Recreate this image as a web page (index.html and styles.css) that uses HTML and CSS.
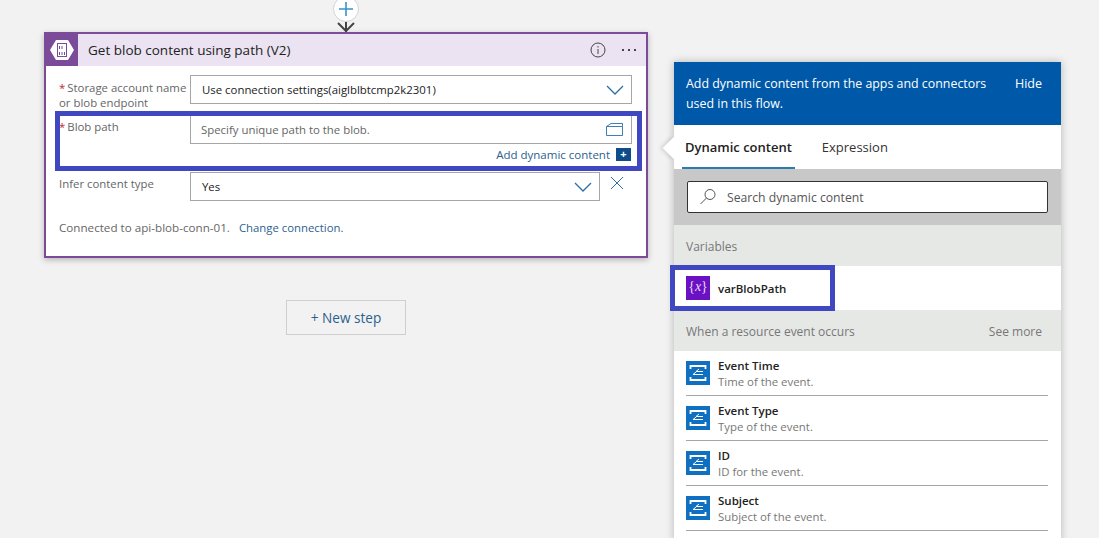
FILE: index.html
```html
<!DOCTYPE html>
<html lang="en">
<head>
    <meta charset="UTF-8">
    <title>Get blob content using path</title>
    <link rel="stylesheet" href="styles.css">
</head>
<body>

<div class="canvas">
    <div class="connector">
        <div class="add-circle">
            <svg width="16" height="16" viewBox="0 0 16 16"><path d="M8 1v14M1 8h14" stroke="#3a93c6" stroke-width="1.6"/></svg>
        </div>
        <svg class="arrow" width="20" height="12" viewBox="0 0 20 12"><path d="M2 1l8 8 8-8M10 0v10" fill="none" stroke="#444" stroke-width="2"/></svg>
    </div>

    <div class="card">
        <div class="card-head">
            <div class="card-icon">
                <svg width="24" height="22" viewBox="0 0 24 22">
                    <path d="M6 1h12l6 10-6 10H6L0 11z" fill="#fff"/>
                    <rect x="7.500" y="4.500" width="9" height="13" fill="#fff" stroke="#7b4a99"/>
                    <path d="M9.500 7v3M12 7v3M9.500 13v3M12 13v3M14.500 13v3" stroke="#7b4a99"/>
                </svg>
            </div>
            <div class="card-title">Get blob content using path (V2)</div>
            <svg class="info" width="16" height="16" viewBox="0 0 16 16"><circle cx="8" cy="8" r="7" fill="none" stroke="#444"/><path d="M8 7v5M8 4v1.500" stroke="#444"/></svg>
            <div class="dots"><i></i><i></i><i></i></div>
        </div>
        <div class="card-body">
            <div class="row row-first">
                <label class="lbl">
                    <span class="lbl-line"><span class="req">*</span>Storage account name</span>
                    <span class="lbl-line">or blob endpoint</span>
                </label>
                <div class="field">
                    <span class="val">Use connection settings(aiglblbtcmp2k2301)</span>
                    <svg class="chev" width="18" height="10" viewBox="0 0 18 10"><path d="M1 1l8 8 8-8" fill="none" stroke="#2c6fa8" stroke-width="1.300"/></svg>
                </div>
            </div>
            <div class="row row-blob">
                <label class="lbl"><span class="req">*</span>Blob path</label>
                <div class="blob-col">
                    <div class="field field-blob">
                        <span class="val hint">Specify unique path to the blob.</span>
                        <svg class="folder" width="17" height="13" viewBox="0 0 17 13"><path d="M.5 3.500h16v9H.5zM.5 3.500L5 .5h11.500v3" fill="none" stroke="#2c6fa8" stroke-width=".9"/></svg>
                    </div>
                    <div class="add-dyn">
                        <span>Add dynamic content</span>
                        <b class="plus-box">+</b>
                    </div>
                </div>
            </div>
            <div class="row row-infer">
                <label class="lbl">Infer content type</label>
                <div class="field field-short">
                    <span class="val">Yes</span>
                    <svg class="chev" width="18" height="10" viewBox="0 0 18 10"><path d="M1 1l8 8 8-8" fill="none" stroke="#2c6fa8" stroke-width="1.300"/></svg>
                </div>
                <svg class="close" width="14" height="14" viewBox="0 0 14 14"><path d="M1 1l12 12M13 1L1 13" stroke="#2c6fa8"/></svg>
            </div>
            <div class="conn">Connected to api-blob-conn-01. <a class="change">Change connection.</a></div>
        </div>
        <div class="mark mark-blob"></div>
    </div>

    <div class="new-step">+ New step</div>
</div>

<div class="panel">
    <div class="callout"></div>
    <div class="panel-head">
        <div class="panel-msg">Add dynamic content from the apps and connectors used in this flow.</div>
        <div class="hide">Hide</div>
    </div>
    <div class="tabs">
        <div class="tab tab-on">Dynamic content</div>
        <div class="tab">Expression</div>
    </div>
    <div class="search-band">
        <div class="search">
            <svg width="18" height="18" viewBox="0 0 18 18"><circle cx="11" cy="6.500" r="5" fill="none" stroke="#555"/><path d="M7.500 10L1.500 16" stroke="#555"/></svg>
            <span>Search dynamic content</span>
        </div>
    </div>
    <div class="band">Variables</div>
    <div class="var-row">
        <div class="ico ico-var"><span>{<em>x</em>}</span></div>
        <div class="item-name">varBlobPath</div>
    </div>
    <div class="band band-more"><span>When a resource event occurs</span><span>See more</span></div>

    <div class="item">
        <div class="ico ico-event"><svg width="24" height="24" viewBox="0 0 24 24"><use href="#evt"/></svg></div>
        <div class="item-text"><div class="item-name">Event Time</div><div class="item-sub">Time of the event.</div></div>
    </div>
    <div class="item">
        <div class="ico ico-event"><svg width="24" height="24" viewBox="0 0 24 24"><use href="#evt"/></svg></div>
        <div class="item-text"><div class="item-name">Event Type</div><div class="item-sub">Type of the event.</div></div>
    </div>
    <div class="item">
        <div class="ico ico-event"><svg width="24" height="24" viewBox="0 0 24 24"><use href="#evt"/></svg></div>
        <div class="item-text"><div class="item-name">ID</div><div class="item-sub">ID for the event.</div></div>
    </div>
    <div class="item">
        <div class="ico ico-event"><svg width="24" height="24" viewBox="0 0 24 24"><use href="#evt"/></svg></div>
        <div class="item-text"><div class="item-name">Subject</div><div class="item-sub">Subject of the event.</div></div>
    </div>
    <div class="mark mark-var"></div>
</div>

<svg width="0" height="0" class="defs">
    <defs>
        <g id="evt">
            <path d="M4.500 8V5h15v3M4.500 16v3h15v-3" fill="none" stroke="#fff" stroke-width="1.800"/>
            <path d="M17 10.500H10l3-2.500M17 13.500H7l3-2.500" fill="none" stroke="#fff"/>
        </g>
    </defs>
</svg>

</body>
</html>
```

FILE: styles.css
```css
html, body {
    margin: 0;
    height: 538px;
    overflow: hidden;
}
body {
    display: flex;
    align-items: flex-start;
    background: #f2f2f2;
    font-family: "Open Sans", "Noto Sans", sans-serif;
    font-size: 12px;
    color: #222;
}
.defs {
    position: absolute;
}
.canvas {
    width: 604px;
    margin-left: 44px;
    display: flex;
    flex-direction: column;
    align-items: center;
}
.connector {
    height: 32px;
    display: flex;
    flex-direction: column;
    align-items: center;
    overflow: hidden;
}
.add-circle {
    width: 24px;
    height: 24px;
    margin-top: -4px;
    flex: none;
    border-radius: 50%;
    background: #fff;
    border: 1px solid #d4d4d4;
    display: flex;
    align-items: center;
    justify-content: center;
}
.arrow {
    flex: none;
    margin-top: 0;
}

/* card */
.card {
    position: relative;
    box-sizing: border-box;
    width: 604px;
    height: 226px;
    background: #fff;
    border: 2px solid #7b4a99;
    box-shadow: 0 2px 6px rgba(0,0,0,.25);
}
.card-head {
    height: 32px;
    background: #ebe3f1;
    display: flex;
    align-items: center;
}
.card-icon {
    width: 32px;
    height: 32px;
    background: #7b4a99;
    display: flex;
    align-items: center;
    justify-content: center;
}
.card-title {
    flex: 1;
    margin-left: 10px;
    font-size: 13.5px;
    color: #222;
}
.info {
    margin-right: 16px;
}
.dots {
    display: flex;
    gap: 4px;
    margin-right: 10px;
}
.dots i {
    width: 2px;
    height: 2px;
    background: #444;
}
.card-body {
    padding: 9px 14px 0 13px;
}
.row {
    display: flex;
    align-items: flex-start;
}
.lbl {
    width: 131px;
    flex: none;
    font-size: 11.4px;
    line-height: 15px;
    color: #666;
}
.lbl-line {
    display: block;
}
.req {
    color: #c0272d;
    margin-right: 2px;
}
.row-first {
    height: 29px;
}
.row-first .lbl {
    padding-top: 5px;
}
.field {
    box-sizing: border-box;
    flex: 1;
    height: 29px;
    border: 1px solid #a6a6a6;
    background: #fff;
    display: flex;
    align-items: center;
    justify-content: space-between;
    padding: 0 7px 0 11px;
}
.val {
    font-size: 11.4px;
    color: #222;
}
.hint {
    color: #666;
}
.chev {
    flex: none;
}
.row-blob {
    margin-top: 11px;
    height: 57px;
}
.row-blob .lbl {
    padding-top: 4px;
}
.blob-col {
    flex: 1;
}
.field-blob {
    padding: 0 8px 0 10px;
}
.add-dyn {
    display: flex;
    justify-content: flex-end;
    align-items: center;
    gap: 6px;
    margin-top: 3px;
    color: #2c5f8f;
    font-size: 11.5px;
}
.plus-box {
    width: 16px;
    height: 13px;
    background: #0f4c8a;
    border-right: 1px solid #fff;
    box-sizing: border-box;
    color: #fff;
    font-size: 11px;
    line-height: 12px;
    text-align: center;
}
.row-infer {
    align-items: center;
}
.row-infer .lbl {
    align-self: flex-start;
    padding-top: 4px;
}
.field-short {
    flex: none;
    width: 410px;
}
.close {
    margin: -7px 0 0 10px;
}
.conn {
    margin-top: 19px;
    font-size: 11.65px;
    color: #666;
}
.change {
    margin-left: 6px;
    font-size: 11.35px;
    color: #2c5f8f;
}
.mark {
    position: absolute;
    box-sizing: border-box;
    border: 5px solid #3f48c0;
}
.mark-blob {
    left: 9px;
    top: 77px;
    width: 587px;
    height: 60px;
}

.new-step {
    box-sizing: border-box;
    width: 120px;
    height: 35px;
    margin-top: 42px;
    border: 1px solid #cfcfcf;
    color: #2c5f8f;
    font-size: 13.6px;
    line-height: 33px;
    text-align: center;
}

/* dynamic content panel */
.panel {
    position: relative;
    width: 387px;
    height: 480px;
    margin: 62px 0 0 26px;
    background: #fff;
    box-shadow: 0 0 8px rgba(0,0,0,.25);
}
.callout {
    position: absolute;
    left: -8px;
    top: 78px;
    width: 16px;
    height: 16px;
    background: #fff;
    transform: rotate(45deg);
    box-shadow: -2px 2px 4px rgba(0,0,0,.12);
}
.panel-head {
    position: relative;
    height: 63px;
    box-sizing: border-box;
    background: #0058a8;
    color: #fff;
    padding: 12px 19px 0 12px;
    display: flex;
    justify-content: space-between;
    font-size: 12.4px;
    line-height: 20px;
}
.panel-msg {
    width: 310px;
}
.hide {
    font-size: 12.5px;
}
.tabs {
    position: relative;
    height: 44px;
    display: flex;
    padding-left: 8px;
    gap: 27px;
}
.tab {
    font-size: 13px;
    line-height: 45px;
    color: #333;
}
.tab-on {
    padding: 0 3px;
    font-weight: 600;
    color: #222;
    border-bottom: 2px solid #2c7cb0;
    height: 42px;
}
.search-band {
    height: 56px;
    background: #c8c8c8;
    padding: 12px 13px 0 13px;
    box-sizing: border-box;
}
.search {
    box-sizing: border-box;
    height: 32px;
    background: #fff;
    border: 1px solid #333;
    border-radius: 2px;
    display: flex;
    align-items: center;
    padding-left: 11px;
    gap: 10px;
    font-size: 12.2px;
    color: #555;
}
.band {
    height: 41px;
    box-sizing: border-box;
    background: #e6e8e6;
    padding: 1px 19px 0 12px;
    line-height: 41px;
    color: #777;
}
.band-more {
    display: flex;
    justify-content: space-between;
}
.var-row {
    height: 44px;
    display: flex;
    align-items: center;
    gap: 8px;
    padding-left: 12px;
}
.var-row .item-name {
    padding-top: 2px;
}
.ico {
    width: 24px;
    height: 24px;
    flex: none;
}
.ico-var {
    background: #6b11c4;
    color: #e6d8f6;
    font-family: "Liberation Serif", serif;
    font-size: 14px;
    line-height: 22px;
    text-align: center;
}
.ico-event {
    background: #0f6fc0;
}
.item-name {
    font-size: 11.5px;
    font-weight: 600;
    line-height: 16px;
    color: #222;
}
.item {
    height: 45px;
    box-sizing: border-box;
    margin: 0 13px 0 12px;
    border-bottom: 1px solid #a6a6a6;
    display: flex;
    align-items: center;
    gap: 8px;
}
.item-text {
    padding-top: 2px;
}
.item-sub {
    font-size: 11.4px;
    line-height: 16px;
    color: #777;
}
.mark-var {
    left: -4px;
    top: 203px;
    width: 165px;
    height: 46px;
}
```
